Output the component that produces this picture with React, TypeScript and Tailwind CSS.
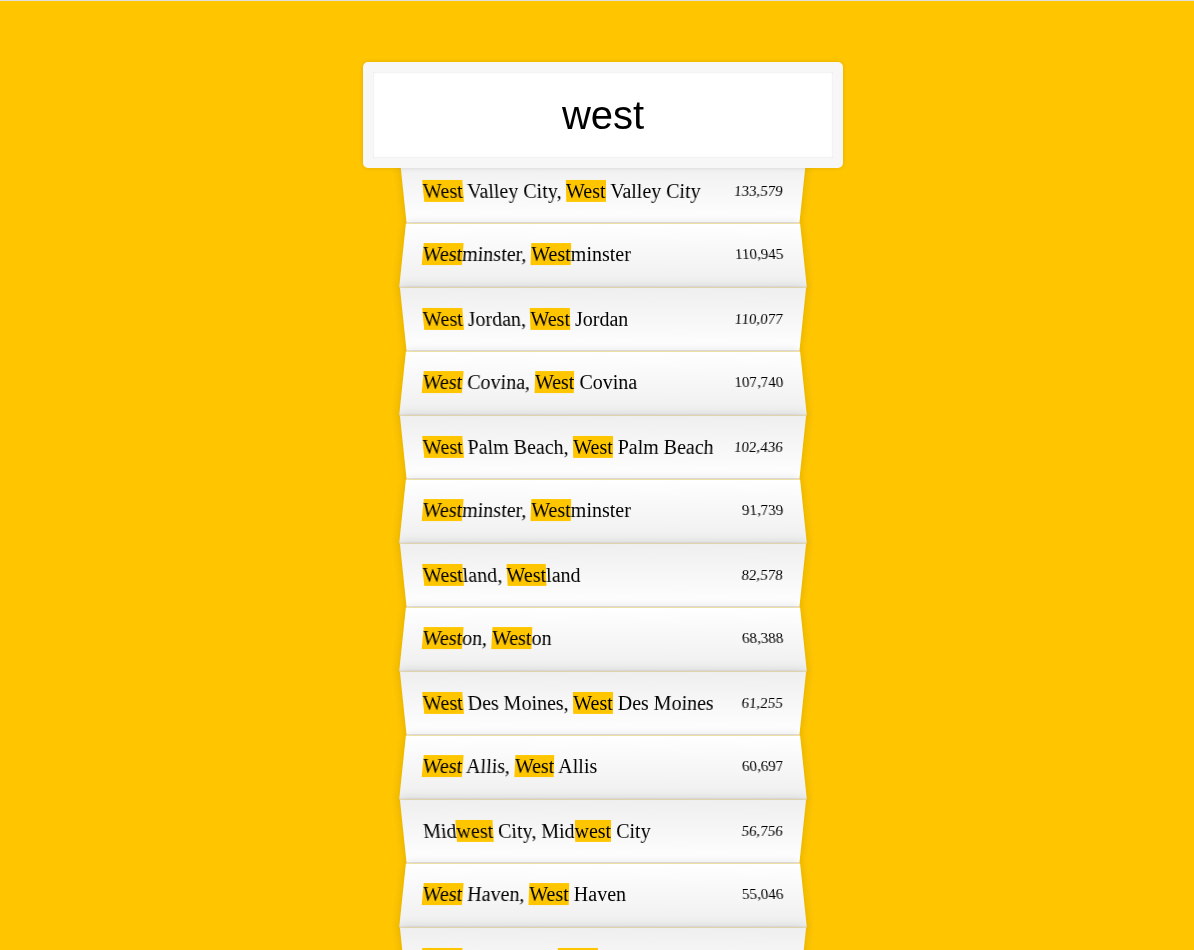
import React from "react";

const CITIES: [string, string][] = [
  ["West Valley City", "133,579"],
  ["Westminster", "110,945"],
  ["West Jordan", "110,077"],
  ["West Covina", "107,740"],
  ["West Palm Beach", "102,436"],
  ["Westminster", "91,739"],
  ["Westland", "82,578"],
  ["Weston", "68,388"],
  ["West Des Moines", "61,255"],
  ["West Allis", "60,697"],
  ["Midwest City", "56,756"],
  ["West Haven", "55,046"],
  ["West New York", "52,122"],
  ["Westfield", "41,301"],
];

const QUERY = "west";

function Highlighted({ text }: { text: string }) {
  const parts = text.split(new RegExp(`(${QUERY})`, "i"));
  return (
    <>
      {parts.map((p, i) =>
        p.toLowerCase() === QUERY ? (
          <span key={i} className="bg-[#ffc600]">
            {p}
          </span>
        ) : (
          <React.Fragment key={i}>{p}</React.Fragment>
        )
      )}
    </>
  );
}

export default function App() {
  return (
    <div className="min-h-screen bg-[#ffc600] border-t border-[#e0e0e0] font-['Liberation_Serif',serif] text-[20px] text-black">
      <div className="flex justify-center pl-3">
        <form className="w-[400px] mt-[51px] mb-[50px]">
          <input
            className="relative top-[10px] z-10 -ml-[40px] w-[480px] p-5 text-center text-[40px] leading-[46px] font-['Liberation_Sans',sans-serif] bg-white border-[10px] border-[#f7f7f7] rounded-[5px] outline-none shadow-[0_0_5px_rgba(0,0,0,0.12),inset_0_0_2px_rgba(0,0,0,0.19)]"
            type="text"
            defaultValue="west"
            readOnly
          />
          <ul className="relative m-0 p-0 -mt-px">
            {CITIES.map(([name, pop], i) => {
              const even = i % 2 === 1;
              return (
                <li
                  key={i}
                  className={`list-none flex justify-between p-5 leading-[23px] border-b border-[#d8d8d8] shadow-[0_0_10px_rgba(0,0,0,0.14)] capitalize ${
                    even
                      ? "bg-linear-to-b from-white to-[#efefef] [transform:perspective(100px)_rotateX(3deg)_translateY(2px)_scale(1.001)]"
                      : "bg-linear-to-t from-white to-[#efefef] [transform:perspective(100px)_rotateX(-3deg)_translateY(3px)]"
                  }`}
                >
                  <span>
                    <Highlighted text={name} />, <Highlighted text={name} />
                  </span>
                  <span className="text-[15px]">{pop}</span>
                </li>
              );
            })}
          </ul>
        </form>
      </div>
    </div>
  );
}
